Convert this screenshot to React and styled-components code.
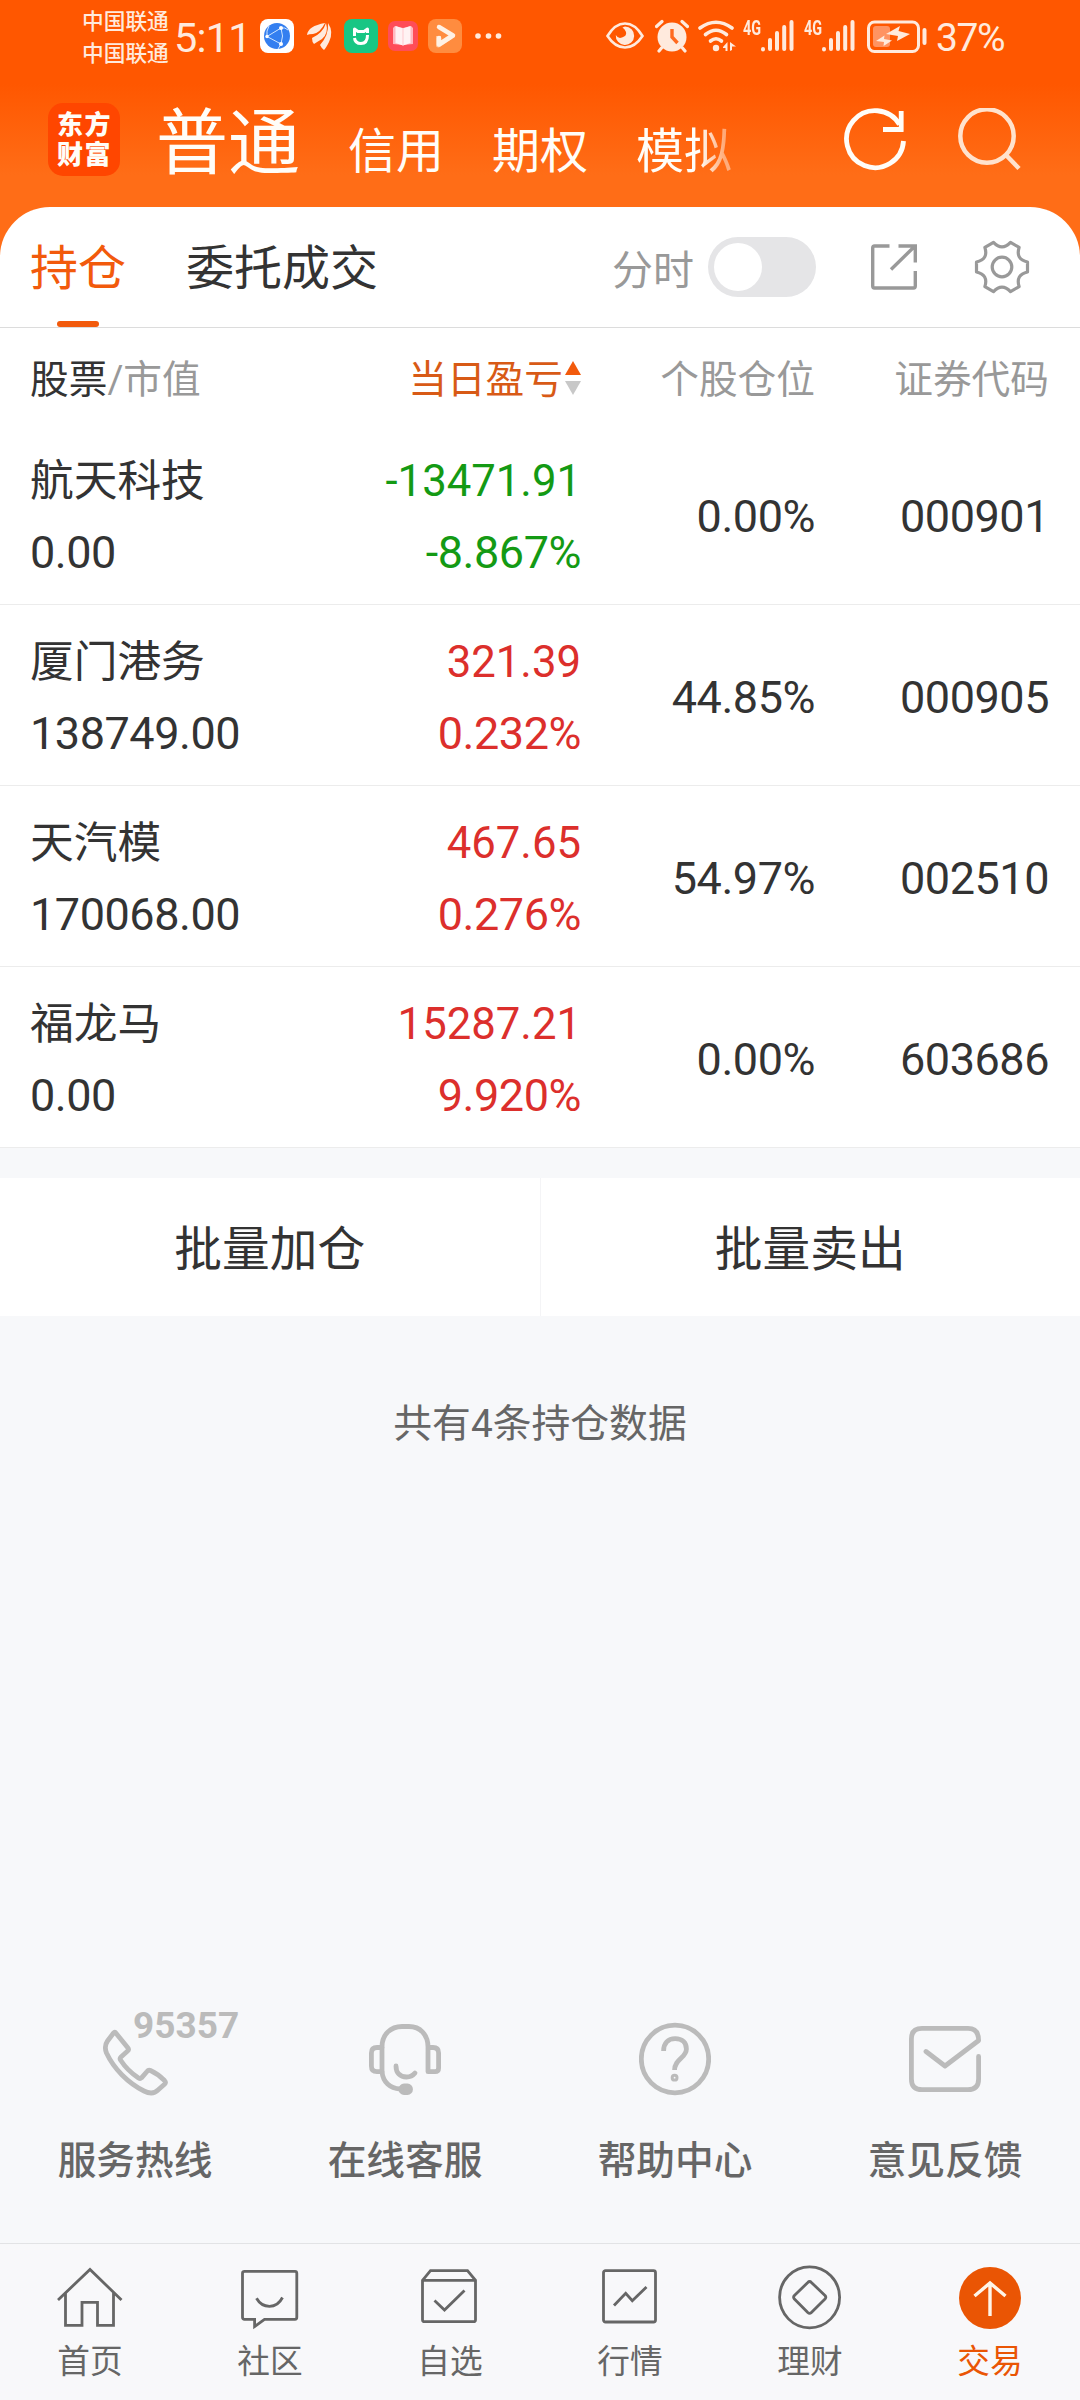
import React from 'react';
import styled, { createGlobalStyle, css } from 'styled-components';

const colors = {
    brand: '#f25a0c',
    active: '#ea5504',
    sorted: '#d85a16',
    dark: '#333',
    grey: '#666',
    light: '#999',
    icon: '#bbb',
    up: '#dc2f2c',
    down: '#149a14',
    status: '#ffeadd',
    page: '#f7f8fa'
};

const GlobalStyle = createGlobalStyle`
    * {
        box-sizing: border-box;
    }

    body {
        margin: 0;
        background: ${colors.page};
        font-family: Roboto, 'Noto Sans CJK SC', sans-serif;
        color: ${colors.dark};
    }

    svg {
        display: block;
        flex-shrink: 0;
    }
`;

const Screen = styled.div`
    display: flex;
    flex-direction: column;
    width: 1080px;
    height: 2400px;
    overflow: hidden;
    background: ${colors.page};
`;

const Top = styled.div`
    background: linear-gradient(#ff5700 0, #ff5700 84px, #ff6d17 175px, #ff6d17 260px);
`;

/* status bar */

const StatusBar = styled.div`
    display: flex;
    align-items: center;
    height: 72px;
    padding-left: 82px;
    color: ${colors.status};
`;

const Carriers = styled.div`
    width: 92px;
    font-size: 21.7px;
    font-weight: 500;
    line-height: 32px;
    white-space: nowrap;
    margin-top: 4px;
`;

const Clock = styled.div`
    width: 86px;
    font-size: 41.5px;
    line-height: 72px;
    letter-spacing: -0.8px;
    padding-top: 4px;
    white-space: nowrap;
`;

const Percent = styled.div`
    font-size: 39px;
    line-height: 72px;
    letter-spacing: -1.4px;
    padding-top: 4px;
    margin-left: 8px;
`;

const Network = styled.div`
    align-self: flex-start;
    width: 18px;
    margin: 18px 0 0 ${props => props.$gap}px;
    font-size: 20px;
    font-weight: 700;
    line-height: 20px;
    white-space: nowrap;

    span {
        display: inline-block;
        transform: scaleX(0.72);
        transform-origin: left;
    }
`;

/* header */

const Header = styled.div`
    display: flex;
    height: 135px;
    padding-left: 48px;
    color: #fffdf8;
`;

const Logo = styled.div`
    width: 72px;
    height: 73px;
    margin-top: 31px;
    padding: 7px 0 0 9px;
    border-radius: 15px;
    background: #ff4600;
    font-size: 26px;
    font-weight: 900;
    line-height: 30px;
    letter-spacing: 1.4px;
    white-space: nowrap;
`;

const Accounts = styled.div`
    display: flex;
    align-items: baseline;
    width: 722px;
    padding: 4px 0 0 36px;
    line-height: 135px;
`;

const Account = styled.div`
    font-size: ${props => (props.$active ? 72 : 48)}px;
    margin-right: 48px;
    white-space: nowrap;

    ${props =>
        props.$faded &&
        css`
            mask-image: linear-gradient(to right, #000 66%, rgba(0, 0, 0, 0.45) 92%);
        `};
`;

const HeaderIcons = styled.div`
    display: flex;
    gap: 44px;
    padding-top: 36px;
`;

/* tabs */

const Tabs = styled.div`
    display: flex;
    align-items: center;
    height: 121px;
    padding-left: 30px;
    background: #fff;
    border-radius: 50px 50px 0 0;
    border-bottom: 1px solid #dcdcdc;
`;

const Tab = styled.div`
    display: flex;
    flex-direction: column;
    align-items: center;
    height: 120px;
    padding-top: 4px;
    margin-right: 60px;
    font-size: 48px;
    line-height: 116px;
    white-space: nowrap;
    color: ${props => (props.$active ? colors.brand : colors.dark)};

    &::after {
        content: '';
        flex-shrink: 0;
        width: 42px;
        height: 6px;
        margin-top: -6px;
        border-radius: 3px;
        background: ${props => (props.$active ? colors.brand : 'transparent')};
    }
`;

const SwitchLabel = styled.div`
    margin-left: 174px;
    font-size: 41px;
    white-space: nowrap;
    color: ${colors.light};
`;

const Switch = styled.div`
    flex-shrink: 0;
    width: 108px;
    height: 60px;
    margin: 0 54px 0 14px;
    padding: 6px;
    border-radius: 30px;
    background: #e5e5e7;

    &::after {
        content: '';
        display: block;
        width: 48px;
        height: 48px;
        border-radius: 50%;
        background: #fff;
    }
`;

/* positions */

const Grid = styled.div`
    display: grid;
    grid-template-columns: 300px 251px 234px 234px;
    align-items: center;
    padding: 0 30px;
    background: #fff;
`;

const TableHead = styled(Grid)`
    height: 96px;
    font-size: 38.7px;
    color: ${colors.light};
`;

const HeadName = styled.div`
    display: flex;

    span:first-child {
        color: ${colors.dark};
    }
`;

const Row = styled(Grid)`
    height: 181px;
    padding-top: 4px;
    border-bottom: 1px solid #ececec;
    font-size: 45px;
    line-height: 73px;
    letter-spacing: -0.45px;
`;

const Cell = styled.div`
    display: flex;
    align-items: center;
    justify-content: flex-end;
`;

const SortedCell = styled(Cell)`
    gap: 2px;
    color: ${colors.sorted};

    svg {
        margin-top: 4px;
    }
`;

const Amounts = styled.div`
    text-align: right;
    color: ${props => (props.$negative ? colors.down : colors.up)};
`;

const FirstLine = styled.div`
    height: 73px;
    padding-top: 2px;
    font-size: 43.7px;
    letter-spacing: 0;
`;

/* batch actions */

const Batch = styled.div`
    display: flex;
    height: 138px;
    margin-top: 30px;
    background: #fff;
`;

const BatchButton = styled.div`
    flex: 1;
    font-size: 47.7px;
    line-height: 144px;
    text-align: center;

    & + & {
        border-left: 1px solid #f4f4f6;
    }
`;

const Total = styled.div`
    flex: 1;
    padding-top: 78px;
    font-size: 38.8px;
    line-height: 60px;
    text-align: center;
    color: ${colors.grey};
`;

/* services */

const Services = styled.div`
    display: flex;
    height: 221px;
`;

const Service = styled.div`
    position: relative;
    display: flex;
    flex: 1;
    flex-direction: column;
    align-items: center;
    font-size: 38.7px;
    font-weight: 500;
    line-height: 60px;
    color: ${colors.grey};

    svg {
        margin-bottom: 35px;
    }
`;

const Hotline = styled.div`
    position: absolute;
    top: -16px;
    left: 133px;
    font-size: 37px;
    font-weight: 700;
    line-height: 40px;
    color: ${colors.icon};
`;

/* bottom navigation */

const Nav = styled.div`
    display: flex;
    height: 157px;
    padding-top: 20px;
    border-top: 1px solid #e2e3e5;
    background: #f8f8fa;
`;

const NavItem = styled.div`
    display: flex;
    flex: 1;
    flex-direction: column;
    align-items: center;
    gap: 7px;
    font-size: 32.7px;
    line-height: 50px;
    color: ${props => (props.$active ? colors.active : colors.grey)};
`;

const StatusSvg = styled.svg`
    margin-left: ${props => props.$gap || 0}px;
`;

const Line = styled.svg`
    margin-left: ${props => props.$gap || 0}px;
    fill: none;
    stroke: ${props => props.$color || 'currentColor'};
    stroke-width: ${props => props.$weight};
    stroke-linecap: ${props => (props.$round ? 'round' : 'butt')};
    stroke-linejoin: ${props => (props.$round ? 'round' : 'miter')};
`;

const NotificationIcons = () => (
    <StatusSvg width="244" height="36" viewBox="0 0 244 36">
        <rect x="0" y="1" width="34" height="34" rx="8" fill="#fff" />
        <circle cx="17" cy="18" r="13" fill="#347ff0" />
        <path
            d="M21 10L7 18.500L21 26Q24 18 21 10M7 18.500Q6 13 9 8M21 10Q25 9 28 12M21 26L18 31"
            fill="none"
            stroke="#cfe6ff"
        />
        <circle cx="21" cy="10" r="2" fill="#fff" />
        <circle cx="7" cy="18.500" r="1.700" fill="#fff" />
        <circle cx="21" cy="26" r="2" fill="#fff" />
        <g fill={colors.status}>
            <path d="M47 17Q48 8 65 5Q60 15 53 16Q49 16 47 17Z" />
            <path d="M52 20Q63 15 66 5Q69 15 62 21Q57 24 54 26Q52 24 52 20Z" />
            <path d="M60 27Q69 17 68 5Q74 14 69 24Q66 30 64 32Q62 31 60 27Z" />
        </g>
        <rect x="84" y="1" width="34" height="34" rx="8" fill="#18c684" />
        <g fill="none" stroke="#fff" strokeWidth="3">
            <path d="M94.500 18V11L98 13.500H104L107.500 11V15" strokeLinejoin="round" />
            <path d="M94.500 20Q95 25.500 101 25.500Q107.500 25.500 107.500 17" />
        </g>
        <rect x="128" y="3" width="30" height="30" rx="7" fill="#ff4d58" />
        <path d="M133 10L135 8L143 10L151 8L153 10V26L143 27L133 26Z" fill="#ffb9c0" />
        <path d="M135.500 8L143 10.500L150.500 8V25L143 27.500L135.500 25Z" fill="#fff2f3" />
        <path d="M143 10.500V27.500" stroke="#ffc9cf" />
        <rect x="168" y="1" width="34" height="34" rx="8" fill="#ff8c3f" />
        <path d="M178.500 18V27L191 18.500" fill="none" stroke="#ffc394" strokeWidth="5" strokeLinejoin="round" />
        <path
            d="M179 9L193 17.500L179 26.500V20"
            fill="none"
            stroke="#fff1e4"
            strokeWidth="4.500"
            strokeLinejoin="round"
            strokeLinecap="round"
        />
        <g fill={colors.status}>
            <circle cx="218" cy="18" r="2.800" />
            <circle cx="228.500" cy="18" r="2.800" />
            <circle cx="238.500" cy="18" r="2.800" />
        </g>
    </StatusSvg>
);

const EyeIcon = () => (
    <StatusSvg $gap="102" width="38" height="36" viewBox="0 0 38 36">
        <path
            d="M1.500 18Q9 5.500 19 5.500T36.500 18Q29 29.500 19 29.500T1.500 18Z"
            fill="none"
            stroke={colors.status}
            strokeWidth="2.600"
        />
        <path d="M19 8.500A9.200 9.200 0 1 1 9.800 17Q12 21 16 19.500Q21 18 20 14Q19 11 16.500 9.500Z" fill={colors.status} />
    </StatusSvg>
);

const AlarmIcon = () => (
    <StatusSvg $gap="11" width="34" height="36" viewBox="0 0 34 36">
        <circle cx="17" cy="19" r="14.500" fill={colors.status} />
        <path
            d="M1.500 8.500L7 3.500M32.500 8.500L27 3.500M6.500 30L4 33M27.500 30L30 33"
            stroke={colors.status}
            strokeWidth="3.200"
            strokeLinecap="round"
        />
        <path d="M17 11V19L22.500 25" fill="none" stroke="#ff6a20" strokeWidth="3.400" />
    </StatusSvg>
);

const WifiIcon = () => (
    <StatusSvg $gap="9" width="38" height="36" viewBox="0 0 38 36">
        <g fill="none" stroke={colors.status} strokeWidth="3.600" strokeLinecap="round">
            <path d="M2 10Q18 -1.500 34 10" />
            <path d="M7.500 16.500Q18 8 28.500 16.500" />
            <path d="M12.500 23Q18 18.500 23.500 23" />
        </g>
        <circle cx="18" cy="30" r="3.200" fill={colors.status} />
        <path d="M25 29L29.500 24V33H27.500V30H25ZM32 24L38 28.500H34V32L32 33Z" fill={colors.status} />
    </StatusSvg>
);

const SignalIcon = () => (
    <StatusSvg width="34" height="36" viewBox="0 0 34 36">
        <path
            d="M2 31V31.500M9 22V31M16 15V31M23.200 9V31M30.500 4V31"
            stroke={colors.status}
            strokeWidth="4"
            strokeLinecap="round"
        />
    </StatusSvg>
);

const BatteryIcon = () => (
    <StatusSvg $gap="11" width="61" height="36" viewBox="0 0 61 36">
        <rect x="1.500" y="4" width="50" height="29.500" rx="6" fill="none" stroke={colors.status} strokeWidth="3" />
        <rect x="6" y="8" width="17" height="21" rx="3" fill="#ff9362" />
        <path d="M19 16L33 8L31.500 13L43 16L30 23L31 18Z" fill={colors.status} />
        <path d="M9 23L17.500 17.500L17 21L25 22.500L16.500 28L17 24Z" fill={colors.status} />
        <rect x="55.500" y="10" width="4" height="17" rx="2" fill={colors.status} />
    </StatusSvg>
);

const RefreshIcon = () => (
    <Line width="68" height="68" viewBox="0 0 68 68" $weight="4.800">
        <path d="M57.500 16.500A28.500 28.500 0 1 0 61.500 33" />
        <path d="M41 21.500H61.500M59.200 3V23.500" />
    </Line>
);

const SearchIcon = () => (
    <Line width="68" height="68" viewBox="0 0 68 68" $weight="4.500" $color="#ffe2cd">
        <circle cx="33" cy="28" r="26.700" />
        <path d="M51.500 46.500L65 60.500" />
    </Line>
);

const ShareIcon = () => (
    <Line width="48" height="48" viewBox="0 0 48 48" $weight="3.400" $color={colors.light}>
        <path d="M19.500 3H4.500Q2.700 3 2.700 5V43Q2.700 45 4.500 45H43.500Q45.300 45 45.300 43V28" />
        <path d="M28.500 3H45.300V19.500M21 26.500L44.500 3.500" />
    </Line>
);

// six teeth joined by concave curves
const polar = (radius, angle) => {
    const rad = (angle * Math.PI) / 180;
    return `${(28 + radius * Math.cos(rad)).toFixed(1)} ${(28 + radius * Math.sin(rad)).toFixed(1)}`;
};

const gearPath = [0, 60, 120, 180, 240, 300]
    .map((a, i) => `${i ? 'L' : 'M'}${polar(26, a - 11)}L${polar(26, a + 11)}Q${polar(15.5, a + 30)} ${polar(26, a + 49)}`)
    .join('');

const GearIcon = () => (
    <Line $gap="56" width="56" height="56" viewBox="0 0 56 56" $weight="3.2" $color={colors.light} $round>
        <path d={`${gearPath}Z`} />
        <circle cx="28" cy="28" r="9.800" />
    </Line>
);

const SortIcon = () => (
    <svg width="16" height="36" viewBox="0 0 16 36">
        <path d="M8 1L16 15H0Z" fill={colors.brand} />
        <path d="M8 35L16 21H0Z" fill="#c8c8c8" />
    </svg>
);

const serviceIcons = {
    phone: (
        <path d="M16.400 10.500L28.600 25.500Q30.300 27.500 28.600 29L22 35Q20.500 36.500 21.500 38C26 45 32 51 39.500 56Q41.200 57 42.500 55.800L48 49.500Q49.500 47.600 51.500 48.500C57 51 62 55 65.500 58.500Q67.300 60.500 65.500 62.200L59 68C55.500 71.500 50 71.500 45 69C29 61 15 47 7.500 31C5.500 26 6 22.500 8.500 19L14.500 11Q15.500 9.800 16.400 10.500Z" />
    ),
    headset: (
        <>
            <path d="M13 50V25C13 12 22 4.500 33 4.500H40C51 4.500 59 12.500 59 25V49.700H66Q69.600 49.700 69.600 46V31Q69.600 25.500 64 25.500H59" />
            <path d="M13 25.500H8Q2.400 25.500 2.400 31V44Q2.400 49.700 8 49.700H13C14 60 21 66.500 31 67" />
            <path d="M27 44C27 51 31 55 37.500 55C41.500 55 44 53.500 46 51" />
            <rect x="32" y="64" width="9.500" height="6.500" rx="3" fill={colors.icon} />
        </>
    ),
    help: (
        <>
            <ellipse cx="36" cy="37" rx="33.700" ry="33.800" />
            <path
                strokeLinecap="butt"
                d="M24.600 29C24.600 21 29 16.700 36.200 16.700C43.500 16.700 47.400 21 47.400 27C47.400 36 35.600 37 35.600 48"
            />
            <circle cx="35.600" cy="55.700" r="1.500" />
        </>
    ),
    mail: (
        <path d="M69.600 34.500V57Q69.600 67.700 59 67.700H13Q2.400 67.700 2.400 57V17Q2.400 6.400 13 6.400H59Q69.600 6.400 69.600 18.500L36 44L17 29.500" />
    )
};

const navIcons = {
    home: <path d="M1 36L33 5.500L64.500 36M8.500 29V61.300H25V38.300H40.500V61.300H56.500V29" />,
    community: (
        <path d="M7.500 7.300H58Q59.800 7.300 59.800 9.300V53.300Q59.800 55.300 58 55.300H27.500L17.600 62.500V55.300H7.500Q5.500 55.300 5.500 53.300V9.300Q5.500 7.300 7.500 7.300ZM19.500 34.300Q24 42.300 32.500 42.300T45.500 33.500" />
    ),
    watch: (
        <>
            <path d="M5.500 16.300L13.500 6.700H50.500L58.500 16.300V55.700Q58.500 57.700 56.500 57.700H7.500Q5.500 57.700 5.500 55.700ZM5.500 16.300H58.500" />
            <path d="M17.500 36.500L27.500 46L47.500 26.500" />
        </>
    ),
    market: (
        <>
            <rect x="6.500" y="6.700" width="52" height="51.300" rx="2" />
            <path d="M17 41.500L28.700 29.300L35.300 36.700L49.500 23" />
        </>
    ),
    wealth: (
        <>
            <ellipse cx="32.600" cy="33.300" rx="30" ry="30.500" />
            <path
                strokeLinejoin="round"
                d="M30.800 18.500Q32.600 16.500 34.400 18.500L48 31.500Q49.600 33.300 48 35.100L34.400 48.500Q32.600 50.200 30.800 48.500L17.400 35.100Q15.800 33.300 17.400 31.500Z"
            />
        </>
    ),
    trade: (
        <>
            <circle cx="33" cy="34" r="31" fill={colors.active} stroke="none" />
            <path d="M33 52V19.500M17.500 32L33 19L48.500 32" stroke="#fff5e8" strokeWidth="3.400" />
        </>
    )
};

const positions = [
    { name: '航天科技', value: '0.00', profit: '-13471.91', rate: '-8.867%', share: '0.00%', code: '000901' },
    { name: '厦门港务', value: '138749.00', profit: '321.39', rate: '0.232%', share: '44.85%', code: '000905' },
    { name: '天汽模', value: '170068.00', profit: '467.65', rate: '0.276%', share: '54.97%', code: '002510' },
    { name: '福龙马', value: '0.00', profit: '15287.21', rate: '9.920%', share: '0.00%', code: '603686' }
];

const services = [
    { icon: 'phone', label: '服务热线', hotline: '95357' },
    { icon: 'headset', label: '在线客服' },
    { icon: 'help', label: '帮助中心' },
    { icon: 'mail', label: '意见反馈' }
];

const navItems = [
    { icon: 'home', label: '首页' },
    { icon: 'community', label: '社区' },
    { icon: 'watch', label: '自选' },
    { icon: 'market', label: '行情' },
    { icon: 'wealth', label: '理财' },
    { icon: 'trade', label: '交易', active: true }
];

const Position = ({ name, value, profit, rate, share, code }) => (
    <Row>
        <div>
            <FirstLine>{name}</FirstLine>
            <div>{value}</div>
        </div>
        <Amounts $negative={profit.startsWith('-')}>
            <FirstLine>{profit}</FirstLine>
            <div>{rate}</div>
        </Amounts>
        <Cell>{share}</Cell>
        <Cell>{code}</Cell>
    </Row>
);

const App = () => (
    <Screen>
        <GlobalStyle />
        <Top>
            <StatusBar>
                <Carriers>
                    <div>中国联通</div>
                    <div>中国联通</div>
                </Carriers>
                <Clock>5:11</Clock>
                <NotificationIcons />
                <EyeIcon />
                <AlarmIcon />
                <WifiIcon />
                <Network $gap="7">
                    <span>4G</span>
                </Network>
                <SignalIcon />
                <Network $gap="9">
                    <span>4G</span>
                </Network>
                <SignalIcon />
                <BatteryIcon />
                <Percent>37%</Percent>
            </StatusBar>
            <Header>
                <Logo>
                    东方
                    <br />
                    财富
                </Logo>
                <Accounts>
                    <Account $active>普通</Account>
                    <Account>信用</Account>
                    <Account>期权</Account>
                    <Account $faded>模拟</Account>
                </Accounts>
                <HeaderIcons>
                    <RefreshIcon />
                    <SearchIcon />
                </HeaderIcons>
            </Header>
            <Tabs>
                <Tab $active>持仓</Tab>
                <Tab>委托成交</Tab>
                <SwitchLabel>分时</SwitchLabel>
                <Switch />
                <ShareIcon />
                <GearIcon />
            </Tabs>
        </Top>
        <TableHead>
            <HeadName>
                <span>股票</span>
                <span>/市值</span>
            </HeadName>
            <SortedCell>
                当日盈亏
                <SortIcon />
            </SortedCell>
            <Cell>个股仓位</Cell>
            <Cell>证券代码</Cell>
        </TableHead>
        {positions.map(item => (
            <Position key={item.code} {...item} />
        ))}
        <Batch>
            <BatchButton>批量加仓</BatchButton>
            <BatchButton>批量卖出</BatchButton>
        </Batch>
        <Total>共有4条持仓数据</Total>
        <Services>
            {services.map(({ icon, label, hotline }) => (
                <Service key={icon}>
                    <Line width="72" height="74" viewBox="0 0 72 74" $weight="4.800" $color={colors.icon} $round>
                        {serviceIcons[icon]}
                    </Line>
                    {hotline && <Hotline>{hotline}</Hotline>}
                    {label}
                </Service>
            ))}
        </Services>
        <Nav>
            {navItems.map(({ icon, label, active }) => (
                <NavItem key={icon} $active={active}>
                    <Line width="66" height="66" viewBox="0 0 66 66" $weight="2.800">
                        {navIcons[icon]}
                    </Line>
                    {label}
                </NavItem>
            ))}
        </Nav>
    </Screen>
);

export default App;
